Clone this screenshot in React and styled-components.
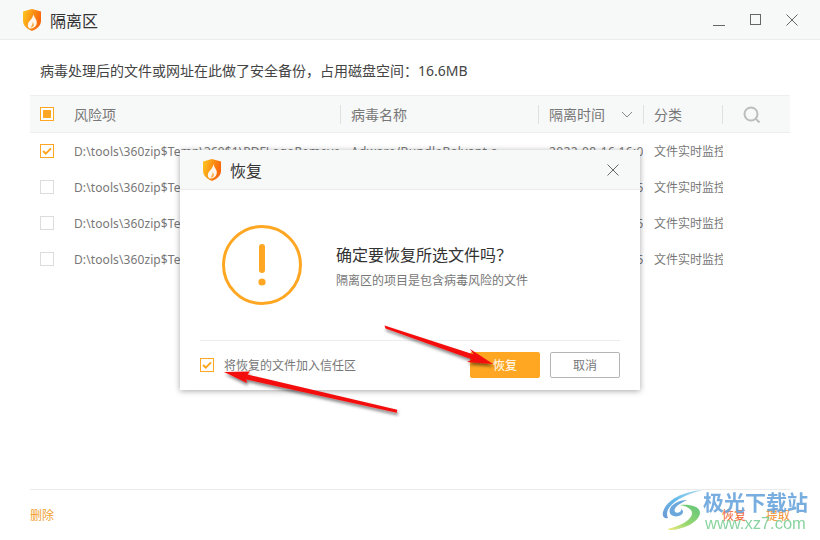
import React from 'react';
import styled, { createGlobalStyle } from 'styled-components';

const rows = [
  { checked: true, path: 'D:\\tools\\360zip$Temp\\360$1\\PDFLogoRemover.exe', virus: 'Adware/BundleBalvant.a', time: '2022-08-16 16:05' },
  { checked: false, path: 'D:\\tools\\360zip$Temp\\360$1\\PDFLogoRemover.dll', virus: 'Adware/BundleBalvant.a', time: '2022-08-16 16:55' },
  { checked: false, path: 'D:\\tools\\360zip$Temp\\360$1\\setup.exe', virus: 'Adware/BundleBalvant.a', time: '2022-08-16 16:55' },
  { checked: false, path: 'D:\\tools\\360zip$Temp\\360$1\\update.exe', virus: 'Adware/BundleBalvant.a', time: '2022-08-16 16:55' },
];

const GlobalStyle = createGlobalStyle`
  html, body { margin: 0; padding: 0; background: #fff; }
  body { font-family: "Noto Sans", "Noto Sans CJK SC", sans-serif; }
`;

const Page = styled.div`
  position: relative;
  width: 820px;
  height: 540px;
  overflow: hidden;
  display: flex;
  flex-direction: column;
  background: #fff;
`;
const TitleBar = styled.div`
  height: 39px;
  flex: none;
  display: flex;
  align-items: center;
  padding-left: 22px;
  background: #f7f8f8;
  border-bottom: 1px solid #ebeced;
`;
const TitleText = styled.span`
  margin-left: 8px;
  font-size: 16px;
  color: #333;
`;
const WindowButtons = styled.div`
  margin-left: auto;
  display: flex;
  align-items: center;
  gap: 25px;
  padding-right: 22px;
  color: #666;
`;
const Main = styled.div`
  flex: 1;
  display: flex;
  flex-direction: column;
  padding: 0 30px;
`;
const Info = styled.div`
  height: 55px;
  flex: none;
  display: flex;
  align-items: center;
  padding: 5px 0 0 10px;
  box-sizing: border-box;
  font-size: 14px;
  color: #444;
`;
const TableHead = styled.div`
  display: flex;
  align-items: center;
  height: 36px;
  flex: none;
  background: #f7f8f8;
  border-top: 1px solid #eeeeee;
  border-bottom: 1px solid #eeeeee;
  font-size: 14px;
  color: #777;
`;
const Row = styled.div`
  display: flex;
  align-items: center;
  height: 36px;
  flex: none;
  font-size: 12px;
  color: #777;
`;
const CheckCell = styled.div`
  width: 44px;
  flex: none;
  padding-left: 10px;
  box-sizing: border-box;
  display: flex;
`;
const Cell = styled.div`
  width: ${(props) => props.$w}px;
  flex: none;
  box-sizing: border-box;
  height: 19px;
  line-height: 18px;
  padding-top: 1px;
  padding-left: ${(props) => props.$pl ?? (props.$line ? 10 : 11)}px;
  letter-spacing: ${(props) => props.$ls ?? 0}px;
  overflow: hidden;
  white-space: nowrap;
  display: flex;
  align-items: center;
  border-left: ${(props) => (props.$line ? '1px solid #dfe0e0' : 'none')};
`;
const Box = styled.span`
  width: 14px;
  height: 14px;
  box-sizing: border-box;
  flex: none;
  display: flex;
  align-items: center;
  justify-content: center;
  background: #fff;
  border: 1px solid ${(props) => (props.$on ? '#ffa722' : '#dcdcdc')};
`;
const BoxFill = styled.span`
  width: 8px;
  height: 8px;
  background: #ffa722;
`;
const Footer = styled.div`
  margin-top: auto;
  height: 50px;
  flex: none;
  display: flex;
  align-items: center;
  justify-content: space-between;
  border-top: 1px solid #ebebeb;
  font-size: 12px;
`;
const FootLink = styled.span`
  color: ${(props) => props.$color};
`;
const FootGroup = styled.div`
  display: flex;
  gap: 20px;
`;
const Dialog = styled.div`
  position: absolute;
  left: 180px;
  top: 150px;
  width: 460px;
  height: 240px;
  display: flex;
  flex-direction: column;
  background: #fff;
  box-shadow: 0 1px 6px rgba(0, 0, 0, 0.35);
`;
const DialogHead = styled.div`
  height: 39px;
  flex: none;
  display: flex;
  align-items: center;
  padding: 0 21px 0 22px;
  background: #f7f8f8;
  border-bottom: 1px solid #ebeced;
`;
const DialogClose = styled.div`
  margin-left: auto;
  display: flex;
  color: #666;
`;
const DialogBody = styled.div`
  height: 150px;
  flex: none;
  display: flex;
  align-items: center;
  padding: 0 0 0 42px;
  box-sizing: border-box;
`;
const Message = styled.div`
  margin-left: 34px;
  padding-top: 2px;
  display: flex;
  flex-direction: column;
  gap: 5px;
`;
const Question = styled.div`
  font-size: 16px;
  color: #333;
  line-height: 24px;
`;
const Hint = styled.div`
  font-size: 12px;
  color: #777;
  line-height: 18px;
`;
const DialogFoot = styled.div`
  margin: 0 20px;
  flex: 1;
  display: flex;
  align-items: center;
  padding-bottom: 1px;
  border-top: 1px solid #ececec;
`;
const TrustLabel = styled.span`
  margin-left: 10px;
  font-size: 12px;
  color: #777;
`;
const Button = styled.button`
  width: 70px;
  height: 26px;
  padding: 0;
  margin-left: ${(props) => (props.$primary ? 'auto' : '10px')};
  border-radius: 2px;
  border: 1px solid ${(props) => (props.$primary ? '#ffa722' : '#b5b5b5')};
  background: ${(props) => (props.$primary ? '#ffa722' : '#fff')};
  color: ${(props) => (props.$primary ? '#fff' : '#777')};
  font-family: inherit;
  font-size: 12px;
`;
const Overlay = styled.svg`
  position: absolute;
  left: 0;
  top: 0;
  pointer-events: none;
`;
const Watermark = styled.div`
  position: absolute;
  left: 657px;
  top: 485px;
  display: flex;
  align-items: flex-start;
  opacity: 0.9;
`;
const MarkText = styled.div`
  display: flex;
  flex-direction: column;
  padding-top: 4px;
`;
const MarkTitle = styled.span`
  font-size: 21px;
  line-height: 26px;
  font-weight: 700;
  color: #6aa5dc;
`;
const MarkUrl = styled.span`
  margin-left: 2px;
  font-family: "Liberation Sans", sans-serif;
  font-size: 16.5px;
  line-height: 17px;
  color: #7ccf96;
`;

const Shield = ({ id }) => (
  <svg width="20" height="24" viewBox="0 0 20 24">
    <defs>
      <linearGradient id={id} x1="0" y1="0" x2="1" y2="0.3">
        <stop offset="0" stopColor="#ffc81e" />
        <stop offset="1" stopColor="#f8670c" />
      </linearGradient>
    </defs>
    <path d="M10 1 L19 3.5 V13 C19 18 14 21.5 10 23 C6 21.5 1 18 1 13 V3.5 Z" fill={`url(#${id})`} />
    <path d="M11.5 6 C12 10 16 12 14.5 16.5 C13.5 19.5 10 21 7.5 20.5 C5 18.5 5.5 15 8 12.5 C9.5 11 11 9 11.5 6 Z" fill="#fff" opacity="0.92" />
    <path d="M10.5 14 C10.8 16 9.5 18 8.5 19.5 L11 19 C12.5 17.5 12 15.5 10.5 14 Z" fill="#f9b04a" />
  </svg>
);

const Tick = () => (
  <svg width="10" height="8" viewBox="0 0 10 8">
    <path d="M1 4 L3.8 6.6 L9 1.4" fill="none" stroke="#ffa722" strokeWidth="2" />
  </svg>
);

const XIcon = ({ size }) => (
  <svg width={size} height={size} viewBox="0 0 12 12">
    <path d="M0.5 0.5 L11.5 11.5 M11.5 0.5 L0.5 11.5" stroke="currentColor" strokeWidth="1" fill="none" />
  </svg>
);

const App = () => (
  <Page>
    <GlobalStyle />
    <TitleBar>
      <Shield id="shieldMain" />
      <TitleText>隔离区</TitleText>
      <WindowButtons>
        <svg width="12" height="12" viewBox="0 0 12 12">
          <path d="M0 11.5 H12" stroke="currentColor" />
        </svg>
        <svg width="11" height="11" viewBox="0 0 11 11">
          <rect x="0.5" y="0.5" width="10" height="10" fill="none" stroke="currentColor" />
        </svg>
        <XIcon size={12} />
      </WindowButtons>
    </TitleBar>
    <Main>
      <Info>病毒处理后的文件或网址在此做了安全备份，占用磁盘空间：16.6MB</Info>
      <TableHead>
        <CheckCell>
          <Box $on><BoxFill /></Box>
        </CheckCell>
        <Cell $w={266} $pl={0}>风险项</Cell>
        <Cell $w={198} $line>病毒名称</Cell>
        <Cell $w={105} $line>
          隔离时间
          <svg width="12" height="8" viewBox="0 0 12 8" style={{ marginLeft: 16 }}>
            <path d="M1 1 L6 6 L11 1" fill="none" stroke="#888" />
          </svg>
        </Cell>
        <Cell $w={79} $line>分类</Cell>
        <Cell $w={60} $line $pl={20}>
          <svg width="18" height="18" viewBox="0 0 18 18">
            <circle cx="8" cy="8" r="6.5" fill="none" stroke="#bdbdbd" strokeWidth="2" />
            <path d="M12.6 12.6 L16.5 16.5" stroke="#bdbdbd" strokeWidth="2" />
          </svg>
        </Cell>
      </TableHead>
      {rows.map((row) => (
        <Row key={row.path}>
          <CheckCell>
            <Box $on={row.checked}>{row.checked && <Tick />}</Box>
          </CheckCell>
          <Cell $w={266} $pl={0} $ls={0.1}>{row.path}</Cell>
          <Cell $w={198} $ls={0.35}>{row.virus}</Cell>
          <Cell $w={105} $ls={0.35}>{row.time}</Cell>
          <Cell $w={80}>文件实时监控</Cell>
        </Row>
      ))}
      <Footer>
        <FootLink $color="#f0a030">删除</FootLink>
        <FootGroup>
          <FootLink $color="#f0602a">恢复</FootLink>
          <FootLink $color="#f0902a">提取</FootLink>
        </FootGroup>
      </Footer>
    </Main>

    <Dialog>
      <DialogHead>
        <Shield id="shieldDialog" />
        <TitleText>恢复</TitleText>
        <DialogClose><XIcon size={12} /></DialogClose>
      </DialogHead>
      <DialogBody>
        <svg width="80" height="80" viewBox="0 0 80 80">
          <circle cx="40" cy="40" r="38.5" fill="none" stroke="#ffa722" strokeWidth="3" />
          <rect x="37" y="19" width="6" height="29" rx="3" fill="#ffa722" />
          <circle cx="40" cy="57" r="3.6" fill="#ffa722" />
        </svg>
        <Message>
          <Question>确定要恢复所选文件吗？</Question>
          <Hint>隔离区的项目是包含病毒风险的文件</Hint>
        </Message>
      </DialogBody>
      <DialogFoot>
        <Box $on><Tick /></Box>
        <TrustLabel>将恢复的文件加入信任区</TrustLabel>
        <Button $primary>恢复</Button>
        <Button>取消</Button>
      </DialogFoot>
    </Dialog>

    <Watermark>
      <svg width="46" height="50" viewBox="2 0 46 50">
        <defs>
          <linearGradient id="markGreen" x1="1" y1="0" x2="0" y2="1">
            <stop offset="0" stopColor="#4fbf6f" />
            <stop offset="0.6" stopColor="#8fd460" />
            <stop offset="1" stopColor="#f0e878" />
          </linearGradient>
          <linearGradient id="markBlue" x1="1" y1="0" x2="0" y2="1">
            <stop offset="0" stopColor="#b5dcf2" />
            <stop offset="0.5" stopColor="#55b4e8" />
            <stop offset="1" stopColor="#5e8fd0" />
          </linearGradient>
        </defs>
        <path d="M48 5 C32 6 12 13 8 27 C7 31 9 34 13 33 C10 27 14 20 24 14 C31 10 40 7 48 5 Z" fill="url(#markBlue)" />
        <path d="M32 15 C23 15 15 20 14.5 26 C14.5 31 21 33 26 30 C29 28 28.5 25 26 24 C27 26.5 23.5 28.5 21 27.5 C18 26 20 22 24 19.5 C26.5 18 29 16.5 32 15 Z" fill="#5d9fd8" />
        <path d="M25 20 C34 19 45 21 45 28 C44 37 28 45 15 45 C13 45 12.5 44 14 43.5 C25 41 37 35 37 28 C37 24 31 21 25 20 Z" fill="url(#markGreen)" />
      </svg>
      <MarkText>
        <MarkTitle>极光下载站</MarkTitle>
        <MarkUrl>www.xz7.com</MarkUrl>
      </MarkText>
    </Watermark>

    <Overlay width="820" height="540" viewBox="0 0 820 540">
      <defs>
        <filter id="arrowShade" x="-20%" y="-40%" width="140%" height="200%">
          <feDropShadow dx="1" dy="2.5" stdDeviation="1.8" floodColor="#000" floodOpacity="0.5" />
        </filter>
      </defs>
      <g fill="#f40d0d" filter="url(#arrowShade)">
        <path d="M384.5 325.6 L473.8 354.6 L470 349 L493 364 L467 362 L472.2 359.4 L385.5 328.4 Z" />
        <path d="M224 372 L250 371.5 L247.6 374.6 L397.3 409.8 L396.7 412.8 L246.4 379.4 L247 383 Z" />
      </g>
    </Overlay>
  </Page>
);

export default App;
